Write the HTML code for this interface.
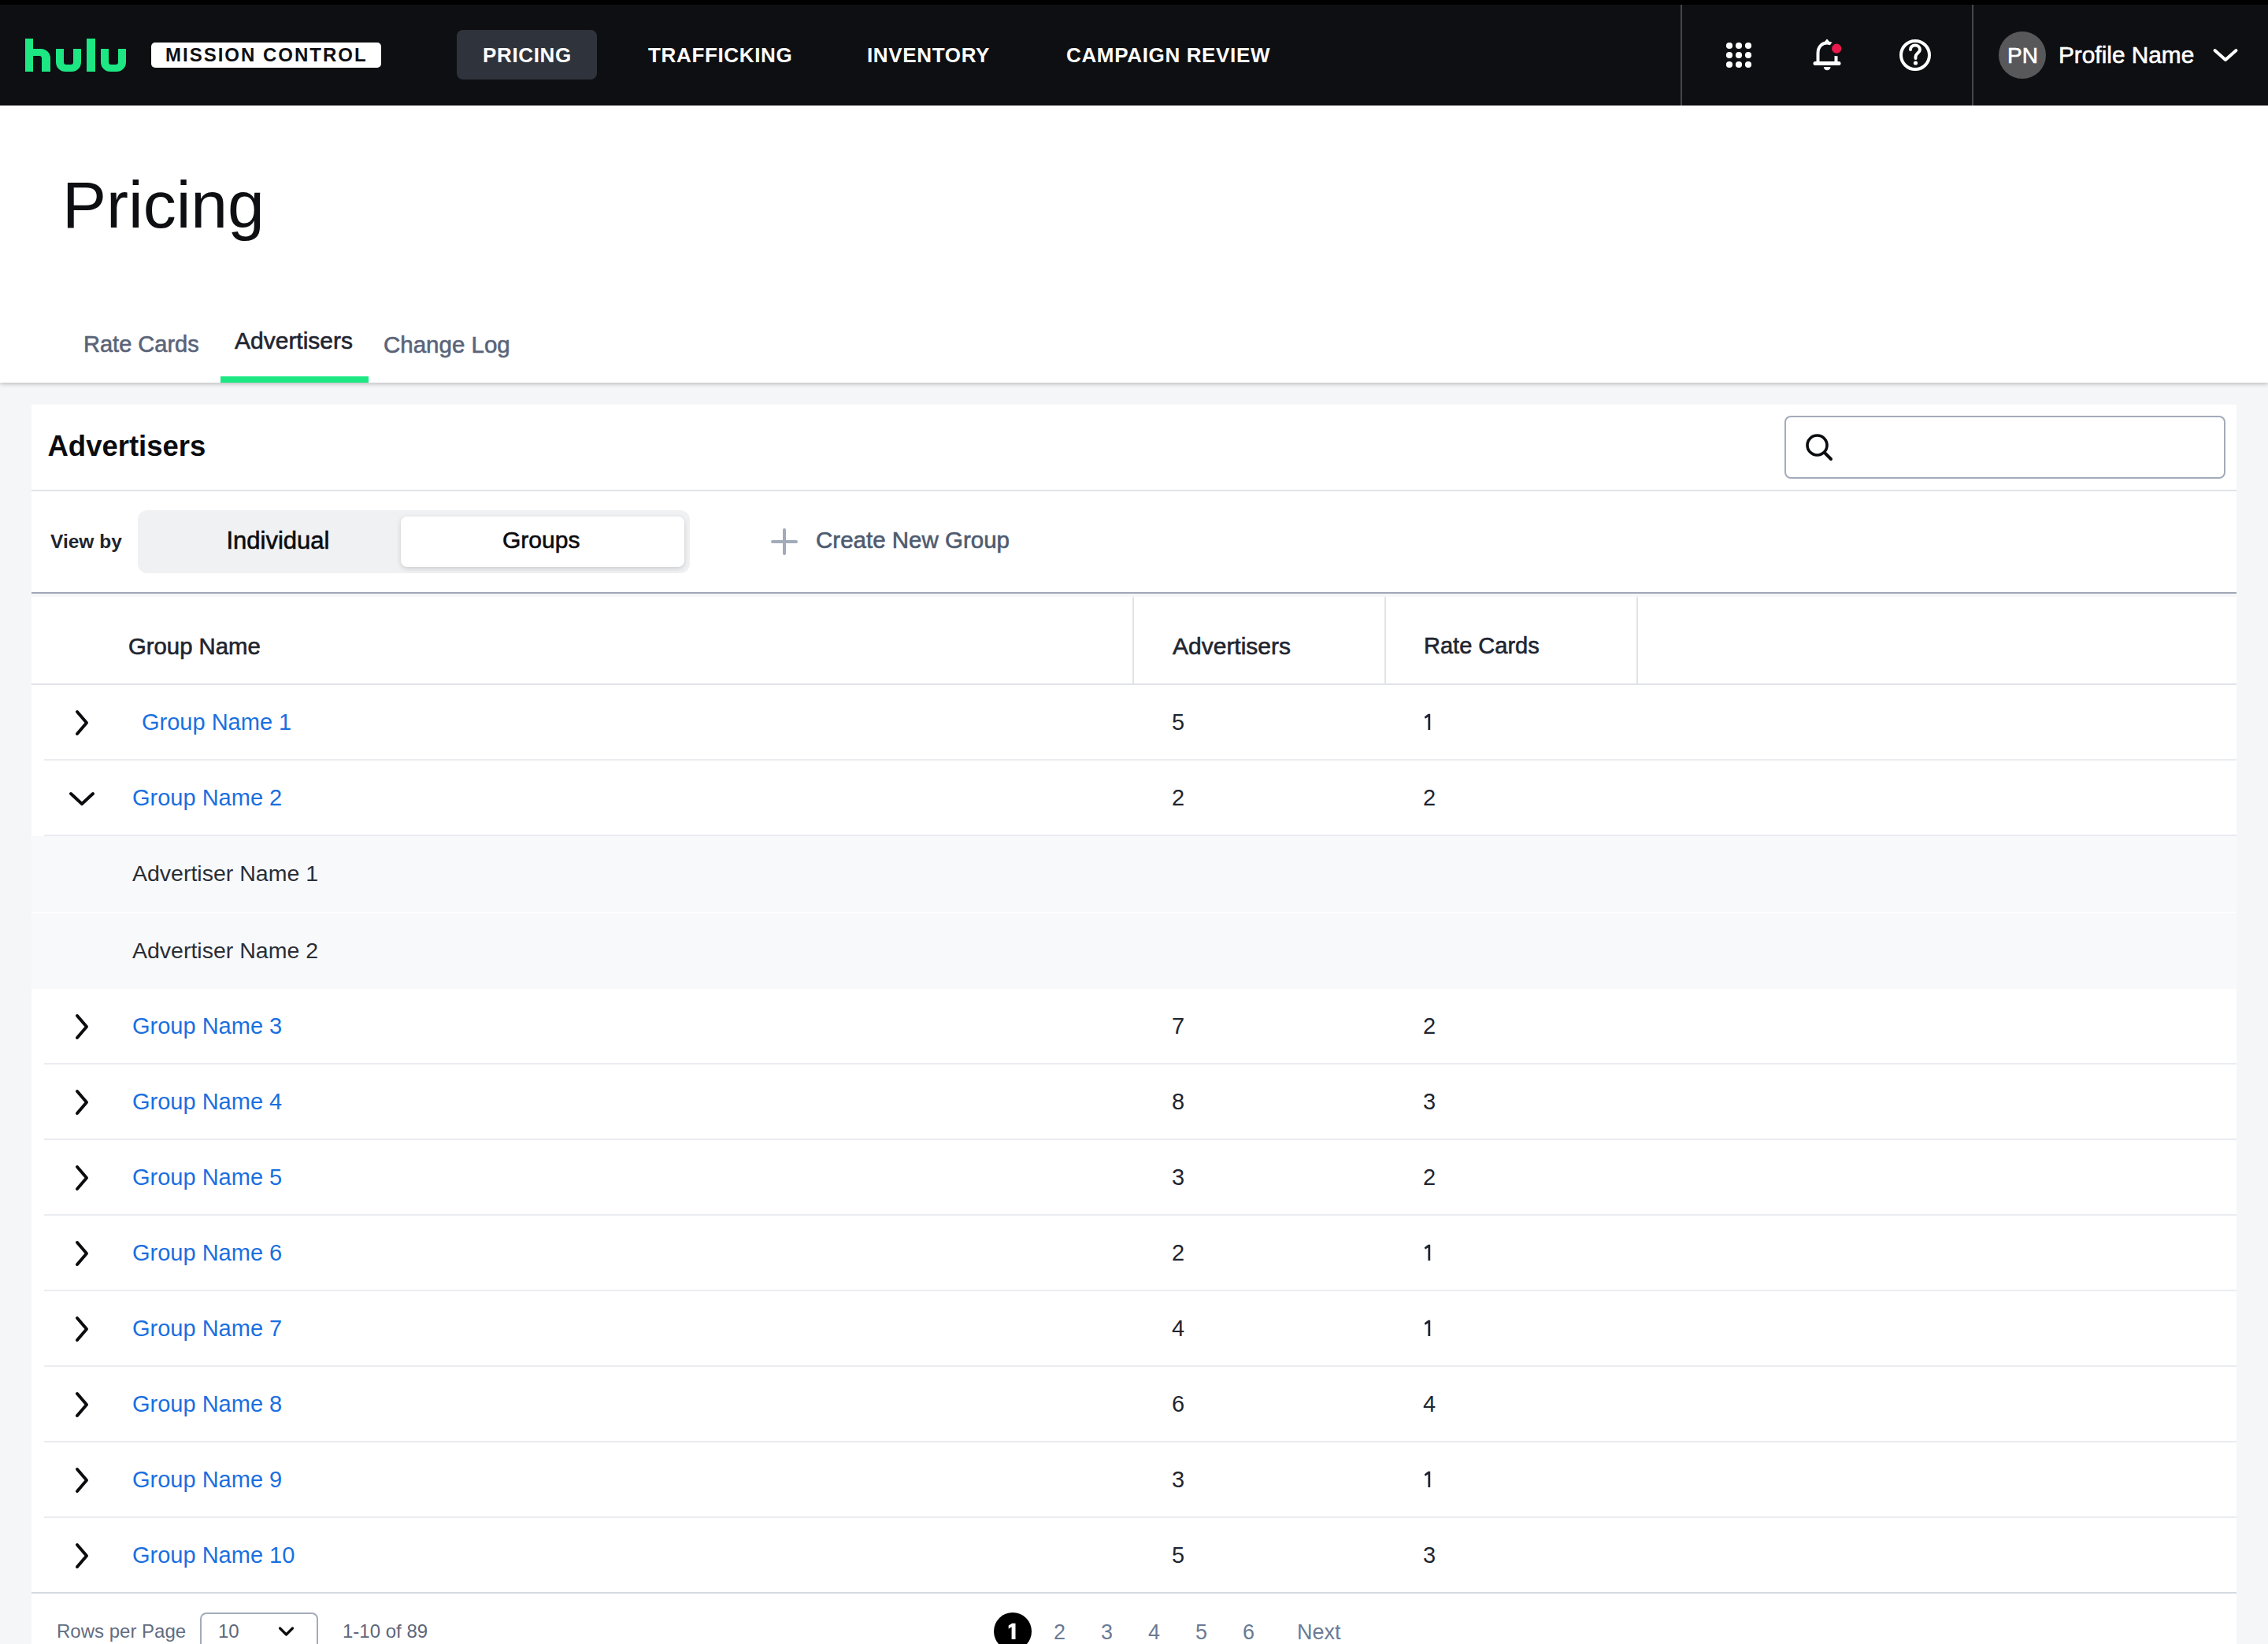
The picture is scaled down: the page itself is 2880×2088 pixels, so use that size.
<!DOCTYPE html>
<html><head><meta charset="utf-8"><title>Pricing</title>
<style>
html,body{margin:0;padding:0}
body{width:2880px;height:2088px;overflow:hidden;position:relative;background:#f5f6f8;font-family:"Liberation Sans",sans-serif}
.t{position:absolute;line-height:1;white-space:pre}
.r{position:absolute}
svg.r{overflow:visible}
</style></head><body>
<div class="r" style="left:0px;top:0px;width:2880px;height:6px;background:#000;"></div>
<div class="r" style="left:0px;top:6px;width:2880px;height:128px;background:#0e0f12;"></div>
<svg class="r" style="left:0;top:0" width="200" height="134" viewBox="0 0 200 134"><g fill="#1ce783">
<path d="M32,49 H42 V62 H52 A12,12 0 0 1 64,74 V91 H53 V74 A3,3 0 0 0 50,71 H42 V91 H32 Z"/>
<path d="M71,62 H81 V79 A3,3 0 0 0 84,82 H90 A3,3 0 0 0 93,79 V62 H103 V79 A12,12 0 0 1 91,91 H83 A12,12 0 0 1 71,79 Z"/>
<rect x="110" y="49" width="11" height="42"/>
<path d="M128,62 H138 V79 A3,3 0 0 0 141,82 H147 A3,3 0 0 0 150,79 V62 H160 V79 A12,12 0 0 1 148,91 H140 A12,12 0 0 1 128,79 Z"/>
</g></svg>
<div class="r" style="left:192px;top:54px;width:292px;height:32px;background:#fff;border-radius:5px"></div>
<div class="t" style="left:210px;top:57.98px;font-size:24px;font-weight:700;color:#0e0f12;letter-spacing:2px;">MISSION CONTROL</div>
<div class="r" style="left:580px;top:38px;width:178px;height:63px;background:#2f333b;border-radius:8px"></div>
<div class="t" style="left:613px;top:56.99px;font-size:26px;font-weight:700;color:#fff;letter-spacing:0.65px;">PRICING</div>
<div class="t" style="left:823px;top:56.99px;font-size:26px;font-weight:700;color:#fff;letter-spacing:0.65px;">TRAFFICKING</div>
<div class="t" style="left:1101px;top:56.99px;font-size:26px;font-weight:700;color:#fff;letter-spacing:0.65px;">INVENTORY</div>
<div class="t" style="left:1354px;top:56.99px;font-size:26px;font-weight:700;color:#fff;letter-spacing:0.65px;">CAMPAIGN REVIEW</div>
<div class="r" style="left:2134px;top:6px;width:2px;height:128px;background:#45474c;"></div>
<div class="r" style="left:2504px;top:6px;width:2px;height:128px;background:#45474c;"></div>
<svg class="r" style="left:2180px;top:40px" width="60" height="60"><circle cx="16" cy="18" r="4.1" fill="#fff"/><circle cx="16" cy="30" r="4.1" fill="#fff"/><circle cx="16" cy="42" r="4.1" fill="#fff"/><circle cx="28" cy="18" r="4.1" fill="#fff"/><circle cx="28" cy="30" r="4.1" fill="#fff"/><circle cx="28" cy="42" r="4.1" fill="#fff"/><circle cx="40" cy="18" r="4.1" fill="#fff"/><circle cx="40" cy="30" r="4.1" fill="#fff"/><circle cx="40" cy="42" r="4.1" fill="#fff"/></svg>
<svg class="r" style="left:2290px;top:40px" width="60" height="60" viewBox="2290 40 60 60">
<path d="M2308.5,80.5 V67.5 C2308.5,59.5 2313.5,54.5 2320,54.5 C2326.5,54.5 2331.5,59.5 2331.5,67.5 V80.5" fill="none" stroke="#fff" stroke-width="4"/>
<path d="M2316.8,54.5 L2320,50.6 L2323.2,54.5 Z" fill="#fff" stroke="#fff" stroke-width="1.5" stroke-linejoin="round"/>
<path d="M2305,80.5 H2335" stroke="#fff" stroke-width="5" stroke-linecap="round"/>
<path d="M2315.8,85 A4.35,4.35 0 0 0 2324.5,85 Z" fill="#fff"/>
<circle cx="2332.2" cy="61.7" r="9.5" fill="#0e0f12"/>
<circle cx="2332.2" cy="61.7" r="6.1" fill="#e8194b"/>
</svg>
<svg class="r" style="left:2400px;top:40px" width="64" height="60" viewBox="2400 40 64 60">
<circle cx="2432" cy="70" r="18" fill="none" stroke="#fff" stroke-width="4"/>
<path d="M2426,63 C2426,59.5 2428.5,57.5 2432,57.5 C2435.5,57.5 2438,60 2438,63 C2438,67 2432.5,67.5 2432.5,72 V74" fill="none" stroke="#fff" stroke-width="4" stroke-linecap="round"/>
<circle cx="2432.5" cy="80" r="2.6" fill="#fff"/>
</svg>
<div class="r" style="left:2538px;top:40px;width:60px;height:60px;background:#58585b;border-radius:50%"></div>
<div class="t" style="left:2549px;top:56.79px;font-size:28px;font-weight:400;color:#fff;letter-spacing:0px;-webkit-text-stroke:0.6px currentColor;">PN</div>
<div class="t" style="left:2614px;top:54.77px;font-size:29.8px;font-weight:400;color:#fff;letter-spacing:0px;-webkit-text-stroke:0.6px currentColor;">Profile Name</div>
<svg class="r" style="left:2800px;top:50px" width="50" height="40" viewBox="2800 50 50 40">
<path d="M2812.5,64 L2826,76 L2839.5,64" fill="none" stroke="#fff" stroke-width="4" stroke-linecap="round" stroke-linejoin="round"/>
</svg>
<div class="r" style="left:0px;top:134px;width:2880px;height:352px;background:#fff;box-shadow:0 2px 5px rgba(0,0,0,0.22)"></div>
<div class="t" style="left:79px;top:218.28px;font-size:84px;font-weight:400;color:#0e0f12;letter-spacing:0px;">Pricing</div>
<div class="t" style="left:106px;top:422.95px;font-size:29px;font-weight:400;color:#5a6478;letter-spacing:0px;-webkit-text-stroke:0.6px currentColor;">Rate Cards</div>
<div class="t" style="left:298px;top:417.60px;font-size:30px;font-weight:400;color:#1f2530;letter-spacing:0px;-webkit-text-stroke:0.6px currentColor;">Advertisers</div>
<div class="t" style="left:487px;top:422.52px;font-size:29.5px;font-weight:400;color:#5a6478;letter-spacing:0px;-webkit-text-stroke:0.6px currentColor;">Change Log</div>
<div class="r" style="left:280px;top:478px;width:188px;height:8px;background:#1ce783;"></div>
<div class="r" style="left:40px;top:514px;width:2800px;height:1600px;background:#fff;"></div>
<div class="t" style="left:60.5px;top:549.10px;font-size:36.5px;font-weight:700;color:#0b0c0f;letter-spacing:0px;">Advertisers</div>
<div class="r" style="left:2266px;top:528px;width:560px;height:80px;background:#fff;box-sizing:border-box;border:2px solid #a3abba;border-radius:8px"></div>
<svg class="r" style="left:2280px;top:540px" width="60" height="60" viewBox="2280 540 60 60">
<circle cx="2307.5" cy="565.5" r="12.5" fill="none" stroke="#0b0c0f" stroke-width="3.6"/>
<path d="M2317,575 L2325,583" stroke="#0b0c0f" stroke-width="4" stroke-linecap="round"/>
</svg>
<div class="r" style="left:40px;top:622px;width:2800px;height:2px;background:#e1e3e8;"></div>
<div class="t" style="left:64px;top:676.26px;font-size:24.5px;font-weight:700;color:#1f2530;letter-spacing:0px;">View by</div>
<div class="r" style="left:175px;top:648px;width:701px;height:80px;background:#f0f1f3;border-radius:12px"></div>
<div class="r" style="left:509px;top:656px;width:360px;height:64px;background:#fff;border-radius:8px;box-shadow:0 2px 6px rgba(0,0,0,0.16)"></div>
<div class="t" style="left:287.5px;top:671.45px;font-size:31px;font-weight:400;color:#0b0c0f;letter-spacing:0px;-webkit-text-stroke:0.6px currentColor;">Individual</div>
<div class="t" style="left:638px;top:671.30px;font-size:30px;font-weight:400;color:#0b0c0f;letter-spacing:0px;-webkit-text-stroke:0.6px currentColor;">Groups</div>
<svg class="r" style="left:970px;top:660px" width="50" height="50" viewBox="970 660 50 50">
<path d="M996,673 V703 M981,688 H1011" stroke="#a3abba" stroke-width="4" stroke-linecap="round"/>
</svg>
<div class="t" style="left:1036px;top:671.02px;font-size:29.5px;font-weight:400;color:#4f5b70;letter-spacing:0px;-webkit-text-stroke:0.6px currentColor;">Create New Group</div>
<div class="r" style="left:40px;top:752px;width:2800px;height:2px;background:#a0a7b6;"></div>
<div class="r" style="left:40px;top:754px;width:2800px;height:4px;background:#f5f6f8;"></div>
<div class="t" style="left:163px;top:806.19px;font-size:29.3px;font-weight:400;color:#1f2530;letter-spacing:0px;-webkit-text-stroke:0.6px currentColor;">Group Name</div>
<div class="t" style="left:1489px;top:805.60px;font-size:30px;font-weight:400;color:#1f2530;letter-spacing:0px;-webkit-text-stroke:0.6px currentColor;">Advertisers</div>
<div class="t" style="left:1808px;top:806.45px;font-size:29px;font-weight:400;color:#1f2530;letter-spacing:0px;-webkit-text-stroke:0.6px currentColor;">Rate Cards</div>
<div class="r" style="left:1438px;top:758px;width:2px;height:110px;background:#e1e3e8;"></div>
<div class="r" style="left:1758px;top:758px;width:2px;height:110px;background:#e1e3e8;"></div>
<div class="r" style="left:2078px;top:758px;width:2px;height:110px;background:#e1e3e8;"></div>
<div class="r" style="left:40px;top:868px;width:2800px;height:2px;background:#e1e3e8;"></div>
<svg class="r" style="left:80px;top:888px" width="40" height="60" viewBox="80 888 40 60"><path d="M98,904 L110,918 L98,932" fill="none" stroke="#0b0c0f" stroke-width="4" stroke-linecap="round" stroke-linejoin="round"/></svg>
<div class="t" style="left:180px;top:902.95px;font-size:29px;font-weight:400;color:#1a6fe0;letter-spacing:0px;">Group Name 1</div>
<div class="t" style="left:1488px;top:902.95px;font-size:29px;font-weight:400;color:#1f2530;letter-spacing:0px;">5</div>
<svg class="r" style="left:1800px;top:901.6px" width="24" height="30" viewBox="1800 901.6 24 30"><path d="M1816.2,906.3000000000001 V926.6 H1813.4 V910.1 L1809.9,912.4 L1808.7,910.2 L1813.6,906.3000000000001 Z" fill="#1f2530"/></svg>
<div class="r" style="left:56px;top:964px;width:2784px;height:2px;background:#eaecf0;"></div>
<svg class="r" style="left:70px;top:984px" width="60" height="60" viewBox="70 984 60 60"><path d="M90,1008 L104,1021 L118,1008" fill="none" stroke="#0b0c0f" stroke-width="4" stroke-linecap="round" stroke-linejoin="round"/></svg>
<div class="t" style="left:168px;top:998.95px;font-size:29px;font-weight:400;color:#1a6fe0;letter-spacing:0px;">Group Name 2</div>
<div class="t" style="left:1488px;top:998.95px;font-size:29px;font-weight:400;color:#1f2530;letter-spacing:0px;">2</div>
<div class="t" style="left:1807px;top:998.95px;font-size:29px;font-weight:400;color:#1f2530;letter-spacing:0px;">2</div>
<div class="r" style="left:56px;top:1060px;width:2784px;height:2px;background:#eaecf0;"></div>
<div class="r" style="left:40px;top:1062px;width:2800px;height:96px;background:#f8f9fb;"></div>
<div class="t" style="left:168px;top:1094.87px;font-size:28.5px;font-weight:400;color:#2a2e36;letter-spacing:0px;">Advertiser Name 1</div>
<div class="r" style="left:40px;top:1158px;width:2800px;height:2px;background:#fff;"></div>
<div class="r" style="left:40px;top:1160px;width:2800px;height:96px;background:#f8f9fb;"></div>
<div class="t" style="left:168px;top:1192.87px;font-size:28.5px;font-weight:400;color:#2a2e36;letter-spacing:0px;">Advertiser Name 2</div>
<svg class="r" style="left:80px;top:1274px" width="40" height="60" viewBox="80 1274 40 60"><path d="M98,1290 L110,1304 L98,1318" fill="none" stroke="#0b0c0f" stroke-width="4" stroke-linecap="round" stroke-linejoin="round"/></svg>
<div class="t" style="left:168px;top:1288.95px;font-size:29px;font-weight:400;color:#1a6fe0;letter-spacing:0px;">Group Name 3</div>
<div class="t" style="left:1488px;top:1288.95px;font-size:29px;font-weight:400;color:#1f2530;letter-spacing:0px;">7</div>
<div class="t" style="left:1807px;top:1288.95px;font-size:29px;font-weight:400;color:#1f2530;letter-spacing:0px;">2</div>
<div class="r" style="left:56px;top:1350px;width:2784px;height:2px;background:#eaecf0;"></div>
<svg class="r" style="left:80px;top:1370px" width="40" height="60" viewBox="80 1370 40 60"><path d="M98,1386 L110,1400 L98,1414" fill="none" stroke="#0b0c0f" stroke-width="4" stroke-linecap="round" stroke-linejoin="round"/></svg>
<div class="t" style="left:168px;top:1384.95px;font-size:29px;font-weight:400;color:#1a6fe0;letter-spacing:0px;">Group Name 4</div>
<div class="t" style="left:1488px;top:1384.95px;font-size:29px;font-weight:400;color:#1f2530;letter-spacing:0px;">8</div>
<div class="t" style="left:1807px;top:1384.95px;font-size:29px;font-weight:400;color:#1f2530;letter-spacing:0px;">3</div>
<div class="r" style="left:56px;top:1446px;width:2784px;height:2px;background:#eaecf0;"></div>
<svg class="r" style="left:80px;top:1466px" width="40" height="60" viewBox="80 1466 40 60"><path d="M98,1482 L110,1496 L98,1510" fill="none" stroke="#0b0c0f" stroke-width="4" stroke-linecap="round" stroke-linejoin="round"/></svg>
<div class="t" style="left:168px;top:1480.95px;font-size:29px;font-weight:400;color:#1a6fe0;letter-spacing:0px;">Group Name 5</div>
<div class="t" style="left:1488px;top:1480.95px;font-size:29px;font-weight:400;color:#1f2530;letter-spacing:0px;">3</div>
<div class="t" style="left:1807px;top:1480.95px;font-size:29px;font-weight:400;color:#1f2530;letter-spacing:0px;">2</div>
<div class="r" style="left:56px;top:1542px;width:2784px;height:2px;background:#eaecf0;"></div>
<svg class="r" style="left:80px;top:1562px" width="40" height="60" viewBox="80 1562 40 60"><path d="M98,1578 L110,1592 L98,1606" fill="none" stroke="#0b0c0f" stroke-width="4" stroke-linecap="round" stroke-linejoin="round"/></svg>
<div class="t" style="left:168px;top:1576.95px;font-size:29px;font-weight:400;color:#1a6fe0;letter-spacing:0px;">Group Name 6</div>
<div class="t" style="left:1488px;top:1576.95px;font-size:29px;font-weight:400;color:#1f2530;letter-spacing:0px;">2</div>
<svg class="r" style="left:1800px;top:1575.6px" width="24" height="30" viewBox="1800 1575.6 24 30"><path d="M1816.2,1580.3 V1600.6 H1813.4 V1584.1 L1809.9,1586.3999999999999 L1808.7,1584.1999999999998 L1813.6,1580.3 Z" fill="#1f2530"/></svg>
<div class="r" style="left:56px;top:1638px;width:2784px;height:2px;background:#eaecf0;"></div>
<svg class="r" style="left:80px;top:1658px" width="40" height="60" viewBox="80 1658 40 60"><path d="M98,1674 L110,1688 L98,1702" fill="none" stroke="#0b0c0f" stroke-width="4" stroke-linecap="round" stroke-linejoin="round"/></svg>
<div class="t" style="left:168px;top:1672.95px;font-size:29px;font-weight:400;color:#1a6fe0;letter-spacing:0px;">Group Name 7</div>
<div class="t" style="left:1488px;top:1672.95px;font-size:29px;font-weight:400;color:#1f2530;letter-spacing:0px;">4</div>
<svg class="r" style="left:1800px;top:1671.6px" width="24" height="30" viewBox="1800 1671.6 24 30"><path d="M1816.2,1676.3 V1696.6 H1813.4 V1680.1 L1809.9,1682.3999999999999 L1808.7,1680.1999999999998 L1813.6,1676.3 Z" fill="#1f2530"/></svg>
<div class="r" style="left:56px;top:1734px;width:2784px;height:2px;background:#eaecf0;"></div>
<svg class="r" style="left:80px;top:1754px" width="40" height="60" viewBox="80 1754 40 60"><path d="M98,1770 L110,1784 L98,1798" fill="none" stroke="#0b0c0f" stroke-width="4" stroke-linecap="round" stroke-linejoin="round"/></svg>
<div class="t" style="left:168px;top:1768.95px;font-size:29px;font-weight:400;color:#1a6fe0;letter-spacing:0px;">Group Name 8</div>
<div class="t" style="left:1488px;top:1768.95px;font-size:29px;font-weight:400;color:#1f2530;letter-spacing:0px;">6</div>
<div class="t" style="left:1807px;top:1768.95px;font-size:29px;font-weight:400;color:#1f2530;letter-spacing:0px;">4</div>
<div class="r" style="left:56px;top:1830px;width:2784px;height:2px;background:#eaecf0;"></div>
<svg class="r" style="left:80px;top:1850px" width="40" height="60" viewBox="80 1850 40 60"><path d="M98,1866 L110,1880 L98,1894" fill="none" stroke="#0b0c0f" stroke-width="4" stroke-linecap="round" stroke-linejoin="round"/></svg>
<div class="t" style="left:168px;top:1864.95px;font-size:29px;font-weight:400;color:#1a6fe0;letter-spacing:0px;">Group Name 9</div>
<div class="t" style="left:1488px;top:1864.95px;font-size:29px;font-weight:400;color:#1f2530;letter-spacing:0px;">3</div>
<svg class="r" style="left:1800px;top:1863.6px" width="24" height="30" viewBox="1800 1863.6 24 30"><path d="M1816.2,1868.3 V1888.6 H1813.4 V1872.1 L1809.9,1874.3999999999999 L1808.7,1872.1999999999998 L1813.6,1868.3 Z" fill="#1f2530"/></svg>
<div class="r" style="left:56px;top:1926px;width:2784px;height:2px;background:#eaecf0;"></div>
<svg class="r" style="left:80px;top:1946px" width="40" height="60" viewBox="80 1946 40 60"><path d="M98,1962 L110,1976 L98,1990" fill="none" stroke="#0b0c0f" stroke-width="4" stroke-linecap="round" stroke-linejoin="round"/></svg>
<div class="t" style="left:168px;top:1960.95px;font-size:29px;font-weight:400;color:#1a6fe0;letter-spacing:0px;">Group Name 10</div>
<div class="t" style="left:1488px;top:1960.95px;font-size:29px;font-weight:400;color:#1f2530;letter-spacing:0px;">5</div>
<div class="t" style="left:1807px;top:1960.95px;font-size:29px;font-weight:400;color:#1f2530;letter-spacing:0px;">3</div>
<div class="r" style="left:40px;top:2022px;width:2800px;height:2px;background:#d5d9e0;"></div>
<div class="t" style="left:72px;top:2060.28px;font-size:24px;font-weight:400;color:#636d80;letter-spacing:0px;">Rows per Page</div>
<div class="r" style="left:254px;top:2048px;width:150px;height:80px;background:#fff;box-sizing:border-box;border:2px solid #a3abba;border-radius:8px"></div>
<div class="t" style="left:277px;top:2060.28px;font-size:24px;font-weight:400;color:#5d677a;letter-spacing:0px;">10</div>
<svg class="r" style="left:345px;top:2055px" width="40" height="30" viewBox="345 2055 40 30">
<path d="M355.5,2068 L363.5,2076 L371.5,2068" fill="none" stroke="#0b0c0f" stroke-width="3.2" stroke-linecap="round" stroke-linejoin="round"/>
</svg>
<div class="t" style="left:435px;top:2060.28px;font-size:24px;font-weight:400;color:#5d677a;letter-spacing:0px;">1-10 of 89</div>
<div class="r" style="left:1262px;top:2048px;width:48px;height:48px;background:#000;border-radius:50%"></div>
<svg class="r" style="left:1270px;top:2055px" width="30" height="33" viewBox="1270 2055 30 33"><path d="M1284.6,2082 V2066.2 L1280.7,2068.8 V2064.6 L1285.2,2061.7 H1289.5 V2082 Z" fill="#fff"/></svg>
<div class="t" style="left:1338px;top:2060.14px;font-size:27px;font-weight:400;color:#6b7a94;letter-spacing:0px;">2</div>
<div class="t" style="left:1398px;top:2060.14px;font-size:27px;font-weight:400;color:#6b7a94;letter-spacing:0px;">3</div>
<div class="t" style="left:1458px;top:2060.14px;font-size:27px;font-weight:400;color:#6b7a94;letter-spacing:0px;">4</div>
<div class="t" style="left:1518px;top:2060.14px;font-size:27px;font-weight:400;color:#6b7a94;letter-spacing:0px;">5</div>
<div class="t" style="left:1578px;top:2060.14px;font-size:27px;font-weight:400;color:#6b7a94;letter-spacing:0px;">6</div>
<div class="t" style="left:1647px;top:2060.14px;font-size:27px;font-weight:400;color:#6b7a94;letter-spacing:0px;">Next</div>
<script>(function(){var w=window.innerWidth;if(w&&Math.abs(w-2880)>2){document.documentElement.style.zoom=(w/2880);}})();</script>
</body></html>
